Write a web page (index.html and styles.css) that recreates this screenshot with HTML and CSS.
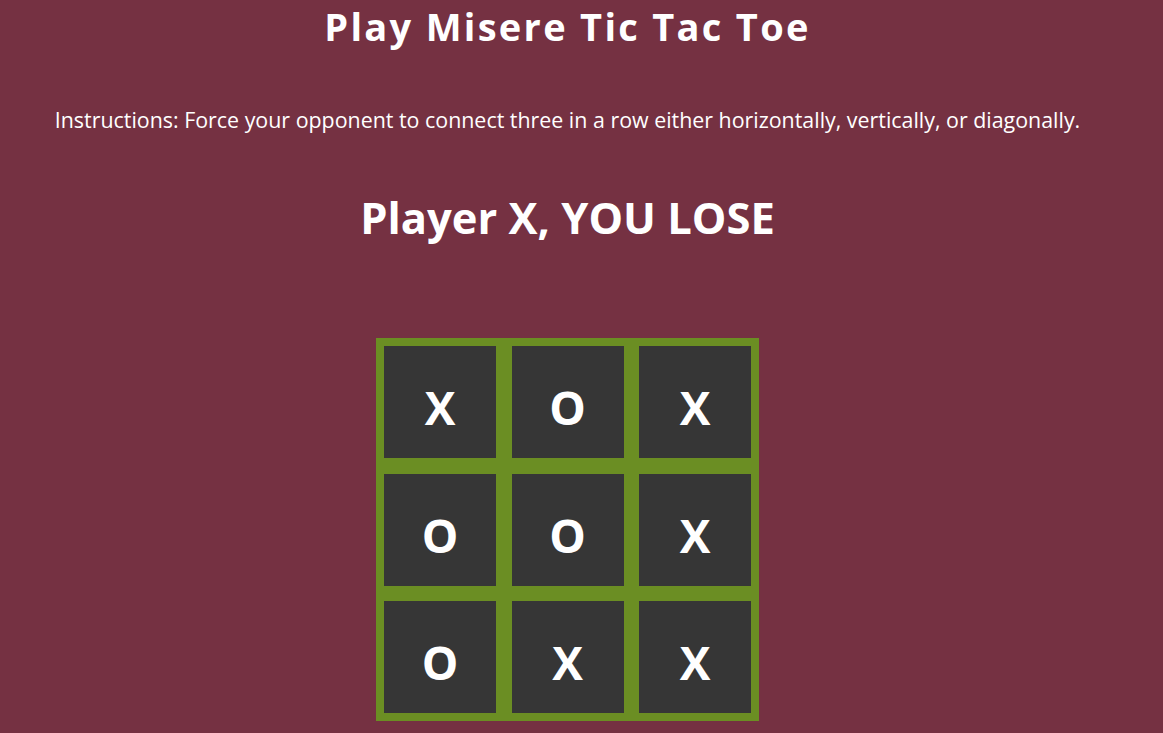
FILE: index.html
```html
<!DOCTYPE html>
<html>
<head>
<meta charset="utf-8">
<title>Misere Tic Tac Toe</title>
<link rel="stylesheet" href="styles.css">
</head>
<body>
<main class="page">
  <h1 class="title">Play Misere Tic Tac Toe</h1>
  <p class="instructions">Instructions: Force your opponent to connect three in a row either horizontally, vertically, or diagonally.</p>
  <h2 class="status">Player X, YOU LOSE</h2>
  <div class="board">
    <div class="cell">X</div>
    <div class="cell">O</div>
    <div class="cell">X</div>
    <div class="cell">O</div>
    <div class="cell">O</div>
    <div class="cell">X</div>
    <div class="cell">O</div>
    <div class="cell">X</div>
    <div class="cell">X</div>
  </div>
</main>
</body>
</html>
```
FILE: styles.css
```css
html, body {
  margin: 0;
  padding: 0;
  background: #753142;
  overflow: hidden;
}
body {
  font-family: "Open Sans", "Noto Sans", sans-serif;
  color: #ffffff;
}
.page {
  width: 1135px;
  display: flex;
  flex-direction: column;
  align-items: center;
}
.title {
  margin: 0;
  font-size: 38px;
  font-weight: 700;
  line-height: 52px;
  letter-spacing: 2.3px;
}
.instructions {
  margin: 53px 0 0;
  font-size: 21.4px;
  line-height: 29px;
}
.status {
  margin: 59px 0 0;
  font-size: 43.5px;
  font-weight: 700;
  line-height: 50px;
}
.board {
  margin-top: 95px;
  display: grid;
  grid-template-columns: repeat(3, 112px);
  grid-template-rows: repeat(3, 112px);
  gap: 15.5px;
  padding: 8px;
  background: #6b8e23;
}
.cell {
  background: #363636;
  display: flex;
  align-items: center;
  justify-content: center;
  padding-top: 10px;
  font-size: 46px;
  font-weight: 700;
}
```
